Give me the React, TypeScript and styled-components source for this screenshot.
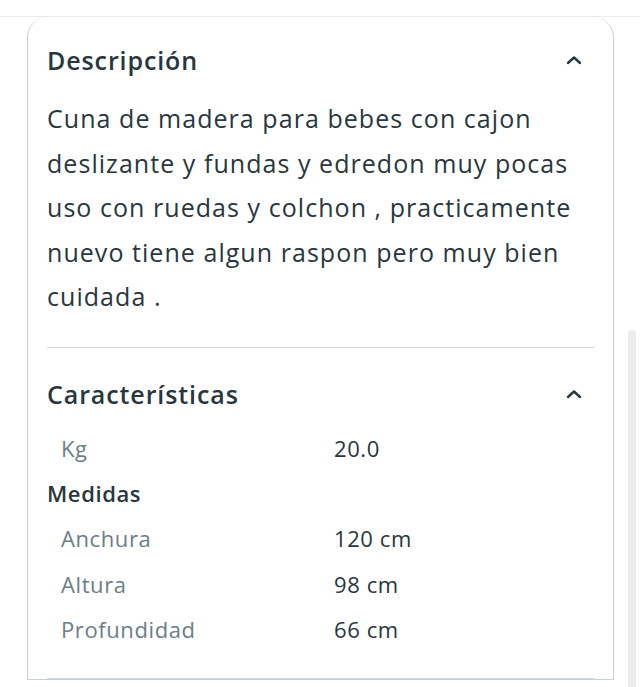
import React from "react";
import styled, {createGlobalStyle} from "styled-components";

const GlobalStyle = createGlobalStyle`
  html, body {
    margin: 0;
    padding: 0;
    background: #ffffff;
    font-family: "Open Sans", Lato, sans-serif;
    color: #29363d;
  }
`;

const Page = styled.div`
  width: 640px;
  min-height: 687px;
  overflow: hidden;
`;

const TopBar = styled.div`
  height: 16px;
  border-bottom: 1px solid #e9edef;
`;

const Card = styled.div`
  margin: -1px 26px 0 27px;
  padding: 0 19px;
  border: 1.5px solid #c7d2d7;
  border-top: none;
  border-radius: 22px 22px 0 0;
`;

const Section = styled.section<{last?: boolean}>`
  padding: ${p => (p.last ? "30px 0 25px" : "28px 0 28px")};
  border-bottom: 1.5px solid #cfd8dc;
`;

const Header = styled.div`
  display: flex;
  align-items: center;
  justify-content: space-between;
  height: 32px;
`;

const Title = styled.h2`
  margin: 0;
  font-size: 25px;
  font-weight: 600;
  letter-spacing: 0.9px;
  color: #29363d;
`;

const Toggle = styled.button`
  display: flex;
  align-items: center;
  justify-content: center;
  width: 28px;
  height: 28px;
  margin-right: 6px;
  padding: 0;
  border: none;
  background: none;
  color: #29363d;
`;

const Body = styled.p`
  margin: 20px 0 0;
  font-size: 25px;
  line-height: 44.5px;
  letter-spacing: 1.05px;
  color: #29363d;
`;

const Table = styled.div`
  display: grid;
  grid-template-columns: 287px 1fr;
  margin-top: 16px;
  font-size: 22px;
  line-height: 45.4px;
  letter-spacing: 0.6px;
`;

const Label = styled.div`
  padding-left: 14px;
  color: #6b7e87;
`;

const Value = styled.div`
  color: #29363d;
`;

const Group = styled.div`
  grid-column: 1 / -1;
  font-weight: 600;
  color: #29363d;
`;

const Scrollbar = styled.div`
  position: fixed;
  right: 4px;
  top: 330px;
  width: 8px;
  height: 400px;
  border-radius: 4px;
  background: #ececec;
`;

const Chevron = () => (
    <svg width="16" height="10" viewBox="0 0 16 10" fill="none">
        <path d="M2 8 L8 2.5 L14 8" stroke="currentColor" strokeWidth="2.4" strokeLinecap="round" strokeLinejoin="round"/>
    </svg>
);

const rows = [
    {label: "Anchura", value: "120 cm"},
    {label: "Altura", value: "98 cm"},
    {label: "Profundidad", value: "66 cm"},
];

const App = () => {
    return (
        <Page>
            <GlobalStyle/>
            <TopBar/>
            <Card>
                <Section>
                    <Header>
                        <Title>Descripción</Title>
                        <Toggle><Chevron/></Toggle>
                    </Header>
                    <Body>
                        Cuna de madera para bebes con cajon deslizante y fundas y edredon muy pocas uso con ruedas y colchon , practicamente nuevo tiene algun raspon pero muy bien cuidada .
                    </Body>
                </Section>
                <Section last>
                    <Header>
                        <Title>Características</Title>
                        <Toggle><Chevron/></Toggle>
                    </Header>
                    <Table>
                        <Label>Kg</Label>
                        <Value>20.0</Value>
                        <Group>Medidas</Group>
                        {rows.map(r => (
                            <React.Fragment key={r.label}>
                                <Label>{r.label}</Label>
                                <Value>{r.value}</Value>
                            </React.Fragment>
                        ))}
                    </Table>
                </Section>
            </Card>
            <Scrollbar/>
        </Page>
    );
};

export default App;
